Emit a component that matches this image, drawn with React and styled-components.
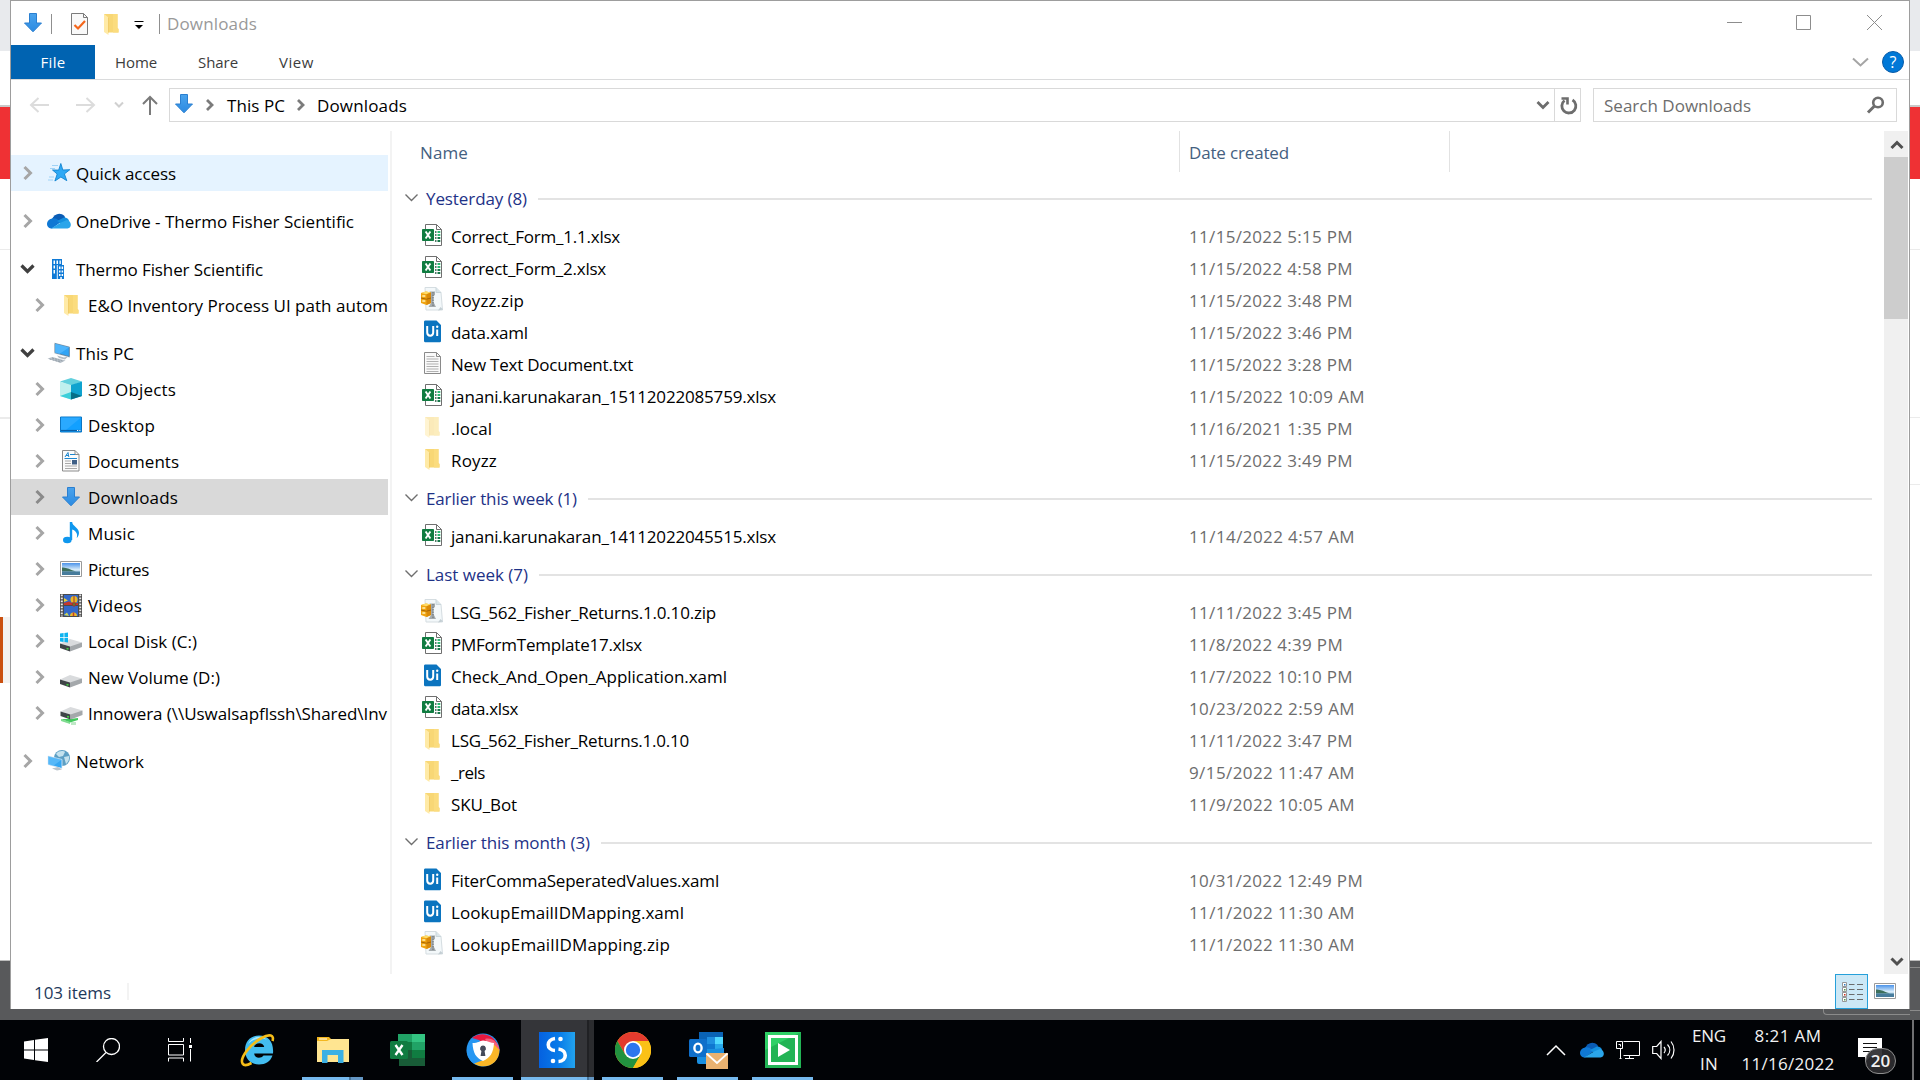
import React, { useLayoutEffect, useRef, useState } from "react";
import styled, { createGlobalStyle } from "styled-components";

const GlobalStyle = createGlobalStyle`
  * { box-sizing: border-box; }
  body { margin: 0; background: #fff; overflow: hidden; }
  svg { display: block; flex: none; }
`;

/* ---------- text ---------- */

const TextSpan = styled.span`
  display: inline-block;
  flex: none;
  white-space: pre;
  font-size: ${(p) => p.$size || 17}px;
  line-height: 24px;
  margin-top: ${(p) => p.$drop || 0}px;
`;

/* Text tracked so that its run is exactly `w` pixels wide. */
function Text({ w, size, drop, children }) {
  const ref = useRef(null);
  const [spacing, setSpacing] = useState(0);
  useLayoutEffect(() => {
    const natural = ref.current.getBoundingClientRect().width;
    setSpacing((w - natural) / children.length);
  }, [w, children]);
  return (
    <TextSpan ref={ref} $size={size} $drop={drop} style={{ letterSpacing: spacing }}>
      {children}
    </TextSpan>
  );
}

/* ---------- small icons ---------- */

const Svg = ({ w = 24, h = 24, box, children }) => (
  <svg width={w} height={h} viewBox={box || `0 0 ${w} ${h}`} fill="none">
    {children}
  </svg>
);

const Stroke = ({ w, h, d, c, sw = 2 }) => (
  <Svg w={w} h={h}>
    <path d={d} stroke={c} strokeWidth={sw} />
  </Svg>
);

const DownArrow = () => (
  <Svg>
    <defs>
      <linearGradient id="dl" x1="0" y1="0" x2="0" y2="1">
        <stop offset="0" stopColor="#4aa3ec" />
        <stop offset="1" stopColor="#2b8ae2" />
      </linearGradient>
    </defs>
    <path d="M8.5 2.5h7v9.5h5L12 20.8 3.5 12h5z" fill="url(#dl)" stroke="#2a7fd0" strokeWidth="1" />
  </Svg>
);

const Folder = ({ faded }) => (
  <Svg>
    <g opacity={faded ? 0.5 : 1} transform="translate(0 1)">
      <path d="M5 1h13.500v14l1 1v3.500H8z" fill="#f8d775" />
      <path d="M14 1h4.500v14l1 1v3.500H14z" fill="#fbdc7e" />
      <path d="M5 1l4.500 3.500V22L5 19z" fill="#ffeaa6" />
      <path d="M9.500 4.500v15" stroke="#edc862" strokeWidth=".8" />
    </g>
  </Svg>
);

const CheckDoc = () => (
  <Svg>
    <path d="M4.500 1.500h12l4 4v17h-16z" fill="#f9f9f9" stroke="#7b7b7b" />
    <path d="M16.500 1.500v4h4" stroke="#7b7b7b" />
    <path d="M7.500 13l3.500 3.500 7-7.500" stroke="#f4661b" strokeWidth="2.200" />
  </Svg>
);

const StarIcon = () => (
  <Svg>
    <path d="M13.800 2.500l2 6.500 7-.300-5.400 4.200 2.400 6.800-5.900-3.700-6 4 2.300-7-4.700-4 6.200.1z" fill="#2ea9f5" stroke="#1283d0" strokeWidth=".9" />
    <path d="M5 4.500h6M3 7.500h5M2 16h5M1 19h5" stroke="#9fd3f7" />
  </Svg>
);

const Cloud = ({ w = 24, h = 16 }) => (
  <Svg w={w} h={h} box="0 0 24 16">
    <path d="M5 6C7 1 13-1.500 17.500 3l1 3-9 4z" fill="#0a5cb5" />
    <path d="M4 15.500C-1.500 15-1.500 6.500 5 5.500c3-.8 5 .5 6.500 1.700L14 9 5 15.500z" fill="#0f78d4" />
    <path d="M10 8l7-3.500c3 0 4.500 1.500 5 3.500l-7 3z" fill="#1490df" />
    <path d="M4 15.500L14 9.500 20 7c4.500.8 5.500 8 .5 8.500z" fill="#2aa5ea" />
  </Svg>
);

const Building = () => (
  <Svg>
    <path d="M5 2h10v20H5z" fill="#0f7ad6" />
    <path d="M11 8h6v14h-6z" fill="#0f7ad6" />
    <path d="M6.500 3.500h1.500v3.500H6.500zM9.500 3.500h1.500v3.500H9.500zM12.500 3.500h1.300v3.500h-1.300zM6.500 8.500h1.500v3H6.500zM6.500 13h1.500v3.500H6.500z" fill="#fff" />
    <path d="M10.300 8v14" stroke="#fff" strokeWidth=".9" />
    <path d="M12 9.500h1.500v2.500H12zM14.600 9.500h1.500v2.500h-1.500zM12 13.500h1.500v2H12zM14.600 13.500h1.500v2h-1.500zM12 17h1.500v2H12zM14.600 17h1.500v2h-1.500zM13.300 20h1.500v2h-1.500z" fill="#fff" />
  </Svg>
);

const Computer = () => (
  <Svg>
    <path d="M7 1.500l16 4v11.500L7 12.500z" fill="#e0e5ea" />
    <path d="M8 2.500l14.300 3.700v9.400L8 11.700z" fill="#31a4f5" stroke="#4f6d85" strokeWidth=".7" />
    <path d="M8 2.500l14.300 3.700-10 6.800L8 11.700z" fill="#5bbcff" opacity=".7" />
    <path d="M10 14.500l7 2 4-1-3 3-6-1.500z" fill="#b4bcc4" />
    <path d="M.5 17.500l5-1.500 13 3.500-5 2.500z" fill="#b9c2ca" />
    <path d="M2.500 18l11 3M5 17l10.500 3" stroke="#8a959f" strokeDasharray="2 1" strokeWidth=".8" />
  </Svg>
);

const Cube = () => (
  <Svg>
    <path d="M12 1l11 3.500L12 9 1 4.500z" fill="#62d0dd" />
    <path d="M1 4.500L12 8v14.500L1 19z" fill="#bff0ee" />
    <path d="M23 4.500L12 8v14.500L23 19z" fill="#0fa3cf" />
    <path d="M12 15l11 4-11 3.500z" fill="#066f86" />
    <path d="M12 15L1 19l11 3.500z" fill="#3ccfd9" />
  </Svg>
);

const DesktopIcon = () => (
  <Svg>
    <path d="M1.500 4h21v15h-21z" fill="#12a0ff" stroke="#0b76c4" />
    <path d="M22 4.500L7 17H2V4.500z" fill="#35adff" opacity=".7" />
    <path d="M2 17.500h20" stroke="#0a5ea6" strokeWidth="1.200" />
    <path d="M18 17.500h1.200M20.300 17.500h1.200" stroke="#fff" strokeWidth="1" />
  </Svg>
);

const DocIcon = () => (
  <Svg>
    <path d="M3.500 1.500h12.500l4 4v16.500H3.500z" fill="#fbfbfb" stroke="#8b8b8b" />
    <path d="M16 1.500v4h4" stroke="#8b8b8b" />
    <path d="M6 8l3-4.500.8 4.500M7 6.500h2.500M11 5.500h5M5.500 9.500h12.500" stroke="#1c86cf" />
    <path d="M6 12h6M6 14.500h6M6 17h12M6 19.500h12" stroke="#a9a9a9" />
    <path d="M13 11h5v4.500h-5z" fill="#3f5f86" />
  </Svg>
);

const Music = () => (
  <Svg>
    <ellipse cx="8.300" cy="19" rx="4.300" ry="3.300" fill="#0f97ee" />
    <path d="M10.800 1h2.400c0 4 6.800 5.500 6.800 11 0 3-2.300 5-2.300 5 1.300-4.500-.7-7-4.500-8.500V19h-2.400z" fill="#0f97ee" />
  </Svg>
);

const Picture = () => (
  <Svg>
    <defs>
      <linearGradient id="sky" x1="0" y1="0" x2="0" y2="1">
        <stop offset="0" stopColor="#4b93ea" />
        <stop offset=".55" stopColor="#d8ecfa" />
        <stop offset="1" stopColor="#6fa5c8" />
      </linearGradient>
    </defs>
    <path d="M1.500 4.500h21v15h-21z" fill="#fff" stroke="#9a9a9a" />
    <path d="M3 6h18v12H3z" fill="url(#sky)" />
    <path d="M3 10.500c4-.5 8 2 14 4H3z" fill="#3d6f5c" />
    <path d="M3 14.500h18V18H3z" fill="#477c9c" />
  </Svg>
);

const Video = () => (
  <Svg>
    <path d="M1 1h22v23H1z" fill="#4a4a4a" />
    <path d="M2.800 1.500v22M21.200 1.500v22" stroke="#e8e8e8" strokeWidth="2" strokeDasharray="1.800 1.200" />
    <path d="M5 2h14v10H5zM5 13h14v10H5z" fill="#3468c8" />
    <path d="M5 10l5-1.500 4 2 5-.5v2H5z" fill="#c6372c" />
    <circle cx="15" cy="6.500" r="3.500" fill="#e9b92a" />
    <path d="M15 3v7M13 10h4l-1 3h-2z" stroke="#a5302a" fill="#4e8b34" />
    <path d="M5 5l4 2.500L5 9z" fill="#e7cf3c" />
    <path d="M11 23a3.500 3.500 0 0 1 7 0z" fill="#e9b92a" />
    <path d="M5 22l3-2.500 2 3.500z" fill="#cdd75a" />
    <path d="M14.500 19.500V23" stroke="#c23a2c" strokeWidth="1.500" />
  </Svg>
);

const driveBody = (
  <>
    <path d="M1 14.500l10-4.500 12 3.500-9 5z" fill="#d9dbdd" />
    <path d="M1 14.500l10 3v5l-10-3.500z" fill="#3f4447" />
    <path d="M11 17.500l12-4v4.500l-12 4.500z" fill="#a4a8ab" />
    <path d="M7.500 19.500l2 .5" stroke="#42d43f" strokeWidth="1.500" />
  </>
);

const Drive = ({ kind }) => (
  <Svg>
    {kind === "net" ? (
      <>
        <path d="M2 18l9 3.500 8-2.500v-2l-8 1z" fill="#42c95c" />
        <path d="M2 18v2l9 3v-2z" fill="#7fdc90" />
        <path d="M12 21h5v3h-5z" fill="#bfe8c6" />
        <g transform="translate(.5 -4)">{driveBody}</g>
      </>
    ) : (
      driveBody
    )}
    {kind === "win" && (
      <path d="M1 4.500l3.600-.5v4H1zM5.400 3.900L9 3.400V8H5.400zM1 8.800h3.600V13L1 12.500zM5.400 8.800H9v4.700l-3.600-.4z" fill="#0fb4f0" />
    )}
  </Svg>
);

const NetworkIcon = () => (
  <Svg>
    <circle cx="15" cy="9" r="8" fill="#5d9fc4" />
    <path d="M9 5c3-4 8-3 9-2l-2 4-4 1zM17 8l5-1c.5 3-.5 6-3 8z" fill="#c4e2ee" />
    <path d="M1 7l14 3.500v9L1 15.500z" fill="#35a7f3" stroke="#e4eef5" strokeWidth=".8" />
    <path d="M1 7l14 3.500-9 6.500-5-1.500z" fill="#6cc3fb" opacity=".6" />
    <path d="M5 19.500l5 2 5-1-4-2.500z" fill="#b9c3cb" />
  </Svg>
);

const ExcelFile = () => (
  <Svg>
    <path d="M5.500 1.500h11l5 5v16h-16z" fill="#fff" stroke="#6f6f6f" />
    <path d="M16.500 1.500v5h5" stroke="#6f6f6f" />
    <path d="M15 9h1.500M15 12h1.500M15 15h1.500M15 18h1.500" stroke="#1d4f38" strokeWidth="1.300" />
    <path d="M17.500 9h2.800M17.500 12h2.800" stroke="#2cba75" strokeWidth="1.800" />
    <path d="M17.500 15h2.800M17.500 18h2.800" stroke="#17784a" strokeWidth="1.800" />
    <rect x="2" y="6" width="12" height="12" rx=".8" fill="#107c41" />
    <path d="M5.600 8.500l4.800 7M10.400 8.500l-4.800 7" stroke="#fff" strokeWidth="1.900" />
  </Svg>
);

const ZipFile = () => (
  <Svg>
    <path d="M5 .500h11l5 5 1.500 17.500L6 23z" fill="#f3f8fa" stroke="#d5dde1" />
    <path d="M16 .500v5h5" fill="#dbe6ea" stroke="#cad6db" />
    <path d="M20.500 20l2.500 2.500-5 1z" fill="#c3ced3" />
    <path d="M9.500 4.500h5.500v3.500l-1.500 1v6l2.500 5H8.500l2.500-4V9z" fill="#a4abae" />
    <path d="M13 5v15" stroke="#757b7e" strokeWidth="1.300" strokeDasharray="1.500 1" />
    <path d="M1 6l5-1.500 5 1v10.500l-4.500 2L1 16z" fill="#f0a411" />
    <path d="M1 6l5-1.500 5 1-4.500 1.700z" fill="#ffdc68" />
    <path d="M6.500 7.200L11 5.500v10.500l-4.500 2z" fill="#d98a0a" />
    <path d="M1 11l5.500 1.200L11 11" stroke="#a86604" />
    <path d="M2.300 9h3M2.300 14h3" stroke="#fff1b5" strokeWidth="1.300" />
  </Svg>
);

const UiFile = () => (
  <Svg>
    <g transform="translate(0 1)">
      <path d="M5 .500h11.500L21 5v16a1.200 1.200 0 0 1-1.200 1.200H5A1.200 1.200 0 0 1 4 21V1.700A1.200 1.200 0 0 1 5 .5z" fill="#0b74bf" />
      <path d="M7.200 6v6.500c0 4.200 6 4.200 6 0V6M17.200 9.500V16" stroke="#fff" strokeWidth="2" />
      <circle cx="17.200" cy="6.800" r="1.200" fill="#fff" />
    </g>
  </Svg>
);

const TxtFile = () => (
  <Svg>
    <path d="M4.500 1.500h12l4 4v17h-16z" fill="#fafafa" stroke="#8a8a8a" />
    <path d="M16.500 1.500v4h4" stroke="#8a8a8a" />
    <path d="M6.500 5.500h8M6.500 8h12M6.500 10.500h12M6.500 13h12M6.500 15.500h12M6.500 18h12M6.500 20.500h12" stroke="#a8a8a8" strokeWidth=".9" />
  </Svg>
);

const fileIcons = { xlsx: ExcelFile, zip: ZipFile, xaml: UiFile, txt: TxtFile, dir: Folder };

/* ---------- desktop and the page behind the window ---------- */

const Desktop = styled.div`
  width: 1920px;
  height: 1080px;
  display: flex;
  flex-direction: column;
  background: #58595b;
  font-family: "Open Sans", "Noto Sans", sans-serif;
  color: #000;
  overflow: hidden;
`;
const Stage = styled.div`
  display: flex;
  height: 1020px;
`;
const Edge = styled.div`
  width: 10px;
  display: flex;
  flex-direction: column;
`;
const Band = styled.div`
  height: ${(p) => p.$h}px;
  background: ${(p) => p.$c};
  border-left: ${(p) => (p.$mark ? "3px solid #ca5010" : "none")};
`;
const EdgeCorner = styled.div`
  width: 87px;
  height: 6px;
  margin-left: auto;
  border: solid #8b8b8b;
  border-width: 0 0 1px 1px;
  border-bottom-left-radius: 4px;
`;
const Center = styled.div`
  width: 1900px;
  display: flex;
  flex-direction: column;
`;
const Window = styled.div`
  height: 1009px;
  background: #fff;
  border: 1px solid #9d9d9d;
  border-bottom: none;
  display: flex;
  flex-direction: column;
`;

/* ---------- title bar and ribbon ---------- */

const TitleBar = styled.div`
  height: 44px;
  display: flex;
  align-items: center;
  padding: 2px 26px 0 10px;
  color: #999;
`;
const Slot = styled.div`
  width: ${(p) => p.$w}px;
  display: flex;
  align-items: center;
  justify-content: ${(p) => p.$j || "flex-start"};
  margin-bottom: ${(p) => p.$lift || 0}px;
  flex: none;
`;
const Tick = styled.div`
  width: 1px;
  height: 20px;
  background: #8f8f8f;
  margin-right: ${(p) => p.$mr}px;
`;
const Spacer = styled.div`
  flex: 1;
`;
const Caption = styled.div`
  display: flex;
  margin-bottom: 3px;
`;
const Ribbon = styled.div`
  height: 35px;
  display: flex;
  align-items: center;
  border-bottom: 1px solid #dadbdc;
  color: #3c3c3c;
  padding-right: 5px;
`;
const FileTab = styled.div`
  align-self: stretch;
  width: 84px;
  background: #0063b1;
  color: #fff;
  display: flex;
  align-items: center;
  justify-content: center;
`;
const Tab = styled.div`
  margin-left: ${(p) => p.$ml}px;
`;
const Help = styled.div`
  width: 22px;
  height: 22px;
  margin-left: 13px;
  border-radius: 50%;
  border: 1px solid #0a5ca8;
  background: #0078d7;
  color: #fff;
  font-size: 16px;
  line-height: 20px;
  text-align: center;
`;

/* ---------- navigation ---------- */

const NavBar = styled.div`
  height: 51px;
  display: flex;
  align-items: flex-start;
  padding: 8px 12px 0 18px;
`;
const NavButtons = styled.div`
  width: 140px;
  height: 34px;
  display: flex;
  align-items: center;
`;
const AddressBox = styled.div`
  width: 1412px;
  height: 34px;
  border: 1px solid #d9d9d9;
  display: flex;
  align-items: center;
`;
const Refresh = styled.div`
  width: 26px;
  height: 32px;
  border-left: 1px solid #d9d9d9;
  margin-left: 3px;
  padding: 2px 0 0 3px;
  display: flex;
  align-items: center;
  justify-content: center;
`;
const SearchBox = styled.div`
  width: 304px;
  height: 34px;
  margin-left: 12px;
  border: 1px solid #d9d9d9;
  display: flex;
  align-items: center;
  justify-content: space-between;
  padding: 0 11px 0 10px;
  color: #6d6d6d;
`;

/* ---------- body ---------- */

const Body = styled.div`
  height: 843px;
  display: flex;
`;
const Tree = styled.div`
  width: 379px;
  padding-top: 24px;
  flex: none;
`;
const TreeRow = styled.div`
  width: 377px;
  height: 36px;
  display: flex;
  align-items: center;
  overflow: hidden;
  padding-left: ${(p) => (p.$child ? 18 : 6)}px;
  margin-top: ${(p) => (p.$gap ? 12 : 0)}px;
  background: ${(p) => (p.$tone === "hover" ? "#e5f3ff" : p.$tone === "selected" ? "#d9d9d9" : "transparent")};
`;
const TreeIcon = styled.div`
  width: 24px;
  height: 24px;
  display: flex;
  align-items: center;
  justify-content: center;
  margin: 0 5px 0 10px;
  flex: none;
`;
const Divider = styled.div`
  width: 2px;
  background: #f3f3f3;
`;
const List = styled.div`
  flex: 1;
  display: flex;
  flex-direction: column;
`;
const Columns = styled.div`
  display: flex;
  height: 46px;
  color: #44607f;
`;
const Column = styled.div`
  width: ${(p) => p.$w}px;
  height: 41px;
  padding: 10px 0 0 ${(p) => p.$pl}px;
  border-right: 1px solid #e2e2e2;
`;
const GroupHead = styled.div`
  height: 44px;
  display: flex;
  align-items: center;
  padding: 0 12px 0 12px;
  color: #1e3287;
`;
const Rule = styled.div`
  flex: 1;
  height: 2px;
  margin-left: 11px;
  background: #e3e3e3;
`;
const FileRow = styled.div`
  height: 32px;
  display: flex;
  align-items: center;
  padding-left: 28px;
`;
const FileIcon = styled.div`
  margin-top: -4px;
`;
const FileName = styled.div`
  width: 745px;
  padding-left: 7px;
`;
const FileDate = styled.div`
  color: #6d6d6d;
`;
const ScrollBar = styled.div`
  width: 25px;
  background: #f0f0f0;
  border-right: 1px solid #fff;
  display: flex;
  flex-direction: column;
  align-items: center;
`;
const ScrollBtn = styled.div`
  height: 26px;
  padding: 2px 0 0 1px;
  display: flex;
  align-items: center;
`;
const Thumb = styled.div`
  width: 24px;
  height: 162px;
  background: #cdcdcd;
  margin-bottom: auto;
`;

/* ---------- status bar ---------- */

const StatusBar = styled.div`
  height: 35px;
  display: flex;
  align-items: flex-start;
  padding-left: 23px;
  color: #1e395b;
`;
const StatusText = styled.div`
  width: 93px;
  padding-top: 7px;
`;
const StatusTick = styled.div`
  width: 2px;
  height: 17px;
  margin-top: 9px;
  background: #f3f3f3;
`;
const ViewButton = styled.div`
  width: 33px;
  height: 35px;
  display: flex;
  align-items: center;
  justify-content: center;
  background: ${(p) => (p.$active ? "#cce8f6" : "transparent")};
  border: 1px solid ${(p) => (p.$active ? "#26a0da" : "transparent")};
  padding-bottom: ${(p) => (p.$active ? 0 : 2)}px;
  margin-right: ${(p) => (p.$active ? 0 : 8)}px;
`;

/* ---------- taskbar ---------- */

const TaskBar = styled.div`
  height: 60px;
  background: #010306;
  display: flex;
  color: #f2f2f2;
`;
const SystemButton = styled.div`
  width: 72px;
  display: flex;
  align-items: center;
  justify-content: center;
`;
const AppButton = styled.div`
  width: ${(p) => (p.$active ? 81 : 75)}px;
  height: 60px;
  margin-left: ${(p) => (p.$active ? -6 : 0)}px;
  display: grid;
  grid-template-rows: 57px 3px;
`;
const AppFace = styled.div`
  width: ${(p) => (p.$active ? 73 : 61)}px;
  padding: 3px ${(p) => (p.$active ? 1 : 0)}px 0 0;
  background: ${(p) => (p.$active ? "linear-gradient(90deg,#343539 66px,#202124 66px,#202124 68px,#2b2c2f 68px)" : "transparent")};
  display: flex;
  align-items: center;
  justify-content: center;
`;
const Underline = styled.div`
  width: ${(p) => p.$w}px;
  background: ${(p) =>
    p.$split
      ? `linear-gradient(90deg,#76b9ed ${p.$split}px,#47759a ${p.$split}px,#47759a ${p.$split + 2}px,#6497c4 ${p.$split + 2}px)`
      : p.$w
      ? "#76b9ed"
      : "transparent"};
`;
const Tray = styled.div`
  display: flex;
  align-items: center;
  margin-left: auto;
`;
const TrayStack = styled.div`
  width: ${(p) => p.$w}px;
  display: flex;
  flex-direction: column;
  align-items: center;
  gap: 4px;
`;
const Notice = styled.div`
  position: relative;
  width: 30px;
  height: 24px;
  margin: 0 0 0 14px;
`;
const NoticeBadge = styled.div`
  position: absolute;
  left: 7px;
  top: 10px;
  width: 31px;
  height: 26px;
  border: 1px solid #8f8f8f;
  border-radius: 13px;
  background: rgba(45, 45, 48, 0.93);
  font-size: 17px;
  font-weight: 600;
  line-height: 24px;
  text-align: center;
`;
const ShowDesktop = styled.div`
  width: 8px;
  height: 60px;
  margin-left: 24px;
  border-left: 2px solid #6f7072;
`;

const WindowsLogo = () => (
  <Svg>
    <path d="M0 3.500L10 2v9.500H0zM11 1.800L24 0v11.500H11zM0 12.500h10V22L0 20.500zM11 12.500h13V24l-13-1.800z" fill="#fff" />
  </Svg>
);
const SearchGlyph = () => (
  <Svg>
    <circle cx="15.500" cy="8.500" r="8" stroke="#fff" strokeWidth="1.300" />
    <path d="M10 14.500L.5 24" stroke="#fff" strokeWidth="1.300" />
  </Svg>
);
const TaskView = () => (
  <Svg>
    <path d="M.5 0v3.500h15V0M.5 6.500h15v10.500H.5zM.5 23.500V20h15v3.500M22.500 0v5M22.500 11v12.500" stroke="#fff" />
    <path d="M21 7h3v3h-3z" fill="#fff" />
  </Svg>
);
const IE = () => (
  <Svg w={36} h={36}>
    <path d="M19 3.500c-8.500 0-14 6-14 14.500s5.500 14.500 14 14.500c6.500 0 11.500-3 13.500-9h-9c-2.500 3.500-9 3-9.300-2H33C34 10 28.500 3.500 19 3.500zm-4.800 11.500c.6-5 9.500-5.300 10 0z" fill="#43bdf0" />
    <path d="M8 12c3-7 13-10 19-4-6-3-14-1-19 4z" fill="#a7e8ff" />
    <path d="M32.500 9c2-6-3-7.500-11-3C10 12.500-.5 26 2.500 31.500c1.500 2.500 5.500 1.500 9-.5" stroke="#f5bd18" strokeWidth="2.600" />
  </Svg>
);
const Explorer = () => (
  <Svg w={36} h={36}>
    <path d="M2 5h12l2 2v5H2z" fill="#f3b71e" />
    <path d="M4 7h8" stroke="#fff" />
    <path d="M2 9h10l4-2h18v23H2z" fill="#ffe591" />
    <path d="M7 31V18h21.500v13H23v-8H12.500v8z" fill="#3cb0e3" />
  </Svg>
);
const Excel = () => (
  <Svg w={36} h={36}>
    <path d="M9 2h26v32H9z" fill="#185c37" />
    <path d="M8 2h14v8H8z" fill="#21a366" />
    <path d="M22 2h13v8H22z" fill="#33c481" />
    <path d="M8 10h14v8H8z" fill="#107c41" />
    <path d="M22 10h13v8H22z" fill="#21a366" />
    <path d="M22 18h13v8H22z" fill="#107c41" />
    <rect x="0" y="9" width="18" height="18" rx="1.500" fill="#107c41" />
    <path d="M5.500 13l7 10M12.500 13l-7 10" stroke="#fff" strokeWidth="2.400" />
  </Svg>
);
const LockApp = () => (
  <Svg w={36} h={36}>
    <circle cx="18" cy="18" r="16.500" fill="#2697f2" />
    <path d="M7 6C15-1 31 1 34.500 18l-6 2L14 8z" fill="#e9193f" />
    <path d="M20 7c6-2 13.500 3 14.500 11l-6 3z" fill="#f5607b" />
    <path d="M34.500 18c0 14-14 20.500-25.500 13.500l9-5 11-14z" fill="#fab627" />
    <path d="M9 31.500c-8.500-5-9.500-16.500-2.500-24.500l2 12 10 9z" fill="#2697f2" />
    <path d="M7.500 11c6 0 7-2 10.500-2.500 5 .5 8 2.500 11 2.500-.5 10-4 15-11 18-7-3-10-8-10.500-18z" fill="#fff" />
    <path d="M18 13.500a3 3 0 0 1 1.600 5.500l.8 5h-4.800l.8-5A3 3 0 0 1 18 13.500z" fill="#454b5a" />
  </Svg>
);
const SApp = () => (
  <Svg w={36} h={36}>
    <defs>
      <linearGradient id="sblue">
        <stop offset="0" stopColor="#0561e0" />
        <stop offset=".55" stopColor="#087be9" />
        <stop offset="1" stopColor="#22a3ee" />
      </linearGradient>
    </defs>
    <path d="M0 0h36v36H0z" fill="url(#sblue)" />
    <path d="M16 6.500c-9 1-9 11.500 0 12" stroke="#fff" strokeWidth="3.600" />
    <path d="M19.500 17c9 1 9 12 0 12.500" stroke="#fff" strokeWidth="3.600" />
    <path d="M18.800 8v9" stroke="#fff" strokeWidth="1.800" opacity=".0" />
    <circle cx="21.500" cy="7" r="2.300" fill="#fff" />
    <circle cx="14" cy="29" r="2.300" fill="#fff" />
  </Svg>
);
const Chrome = () => (
  <Svg w={36} h={36}>
    <circle cx="18" cy="18" r="18" fill="#fbc116" />
    <path d="M2.400 9A18 18 0 0 1 33.600 9H18l-7.800 13.500z" fill="#e33b2e" />
    <path d="M2.400 9A18 18 0 0 0 18 36l7.800-13.500L10.200 22.500z" fill="#22923f" />
    <path d="M18 9h15.600A18 18 0 0 1 18 36l7.800-13.500z" fill="#fbc116" />
    <circle cx="18" cy="18" r="9" fill="#fff" />
    <circle cx="18" cy="18" r="7.200" fill="#2d76ee" />
  </Svg>
);
const Outlook = () => (
  <Svg w={40} h={38}>
    <path d="M11 1h24v20H11z" fill="#0a63b5" />
    <path d="M19 6h8v7h-8z" fill="#1f8fe0" />
    <path d="M27 6h8v7h-8z" fill="#50d9ff" />
    <path d="M19 13h8v7h-8z" fill="#0f77d0" />
    <path d="M27 13h8v7h-8z" fill="#28a8ea" />
    <path d="M9 18h17l10-1v16H11a2 2 0 0 1-2-2z" fill="#1a8fe0" />
    <rect x="1" y="8" width="18" height="18" rx="1.500" fill="#0f6fca" />
    <ellipse cx="10" cy="17" rx="3.600" ry="4.400" stroke="#fff" strokeWidth="2.400" />
    <path d="M18 22h22v16H18z" fill="#eab270" />
    <path d="M18.500 22.500L29 32l10.500-9.500" stroke="#fff" strokeWidth="1.800" />
  </Svg>
);
const PlayApp = () => (
  <Svg w={36} h={36}>
    <path d="M0 0h36v36H0z" fill="#22b455" />
    <path d="M0 0h36L0 18z" fill="#2fd066" />
    <path d="M4.500 4.500h27v27h-27z" stroke="#fff" strokeWidth="3" />
    <path d="M13 11l12 7-12 7z" fill="#fff" />
  </Svg>
);

/* ---------- data ---------- */

const tree = [
  { label: "Quick access", w: 100, icon: <StarIcon />, tone: "hover", state: "closed" },
  { label: "OneDrive - Thermo Fisher Scientific", w: 278, icon: <Cloud />, gap: true, state: "closed" },
  { label: "Thermo Fisher Scientific", w: 187, icon: <Building />, gap: true, state: "open" },
  { label: "E&O Inventory Process UI path autom", w: 300, icon: <Folder />, child: true },
  { label: "This PC", w: 58, icon: <Computer />, gap: true, state: "open" },
  { label: "3D Objects", w: 88, icon: <Cube />, child: true },
  { label: "Desktop", w: 67, icon: <DesktopIcon />, child: true },
  { label: "Documents", w: 91, icon: <DocIcon />, child: true },
  { label: "Downloads", w: 90, icon: <DownArrow />, child: true, tone: "selected" },
  { label: "Music", w: 47, icon: <Music />, child: true },
  { label: "Pictures", w: 61, icon: <Picture />, child: true },
  { label: "Videos", w: 54, icon: <Video />, child: true },
  { label: "Local Disk (C:)", w: 109, icon: <Drive kind="win" />, child: true },
  { label: "New Volume (D:)", w: 132, icon: <Drive />, child: true },
  { label: "Innowera (\\\\Uswalsapflssh\\Shared\\Inv", w: 299, icon: <Drive kind="net" />, child: true },
  { label: "Network", w: 68, icon: <NetworkIcon />, gap: true, state: "closed" },
];

const groups = [
  {
    title: "Yesterday (8)", w: 101,
    files: [
      ["xlsx", "Correct_Form_1.1.xlsx", 169, "11/15/2022 5:15 PM", 164],
      ["xlsx", "Correct_Form_2.xlsx", 155, "11/15/2022 4:58 PM", 164],
      ["zip", "Royzz.zip", 73, "11/15/2022 3:48 PM", 164],
      ["xaml", "data.xaml", 77, "11/15/2022 3:46 PM", 164],
      ["txt", "New Text Document.txt", 182, "11/15/2022 3:28 PM", 164],
      ["xlsx", "janani.karunakaran_15112022085759.xlsx", 325, "11/15/2022 10:09 AM", 176],
      ["faded", ".local", 41, "11/16/2021 1:35 PM", 164],
      ["dir", "Royzz", 46, "11/15/2022 3:49 PM", 164],
    ],
  },
  {
    title: "Earlier this week (1)", w: 151,
    files: [["xlsx", "janani.karunakaran_14112022045515.xlsx", 325, "11/14/2022 4:57 AM", 166]],
  },
  {
    title: "Last week (7)", w: 102,
    files: [
      ["zip", "LSG_562_Fisher_Returns.1.0.10.zip", 265, "11/11/2022 3:45 PM", 164],
      ["xlsx", "PMFormTemplate17.xlsx", 191, "11/8/2022 4:39 PM", 154],
      ["xaml", "Check_And_Open_Application.xaml", 276, "11/7/2022 10:10 PM", 164],
      ["xlsx", "data.xlsx", 67, "10/23/2022 2:59 AM", 166],
      ["dir", "LSG_562_Fisher_Returns.1.0.10", 238, "11/11/2022 3:47 PM", 164],
      ["dir", "_rels", 34, "9/15/2022 11:47 AM", 166],
      ["dir", "SKU_Bot", 66, "11/9/2022 10:05 AM", 166],
    ],
  },
  {
    title: "Earlier this month (3)", w: 164,
    files: [
      ["xaml", "FiterCommaSeperatedValues.xaml", 268, "10/31/2022 12:49 PM", 174],
      ["xaml", "LookupEmailIDMapping.xaml", 233, "11/1/2022 11:30 AM", 166],
      ["zip", "LookupEmailIDMapping.zip", 219, "11/1/2022 11:30 AM", 166],
    ],
  },
];

const apps = [
  { icon: <IE /> },
  { icon: <Explorer />, line: 61, split: 47 },
  { icon: <Excel /> },
  { icon: <LockApp />, line: 61 },
  { icon: <SApp />, line: 73, split: 66, active: true },
  { icon: <Chrome />, line: 61 },
  { icon: <Outlook />, line: 61 },
  { icon: <PlayApp />, line: 61 },
];

/* ---------- composition ---------- */

const FileItem = ({ file: [kind, name, w, date, dw] }) => {
  const Icon = fileIcons[kind] || Folder;
  return (
    <FileRow>
      <FileIcon><Icon faded={kind === "faded"} /></FileIcon>
      <FileName><Text w={w}>{name}</Text></FileName>
      <FileDate><Text w={dw}>{date}</Text></FileDate>
    </FileRow>
  );
};

const TreeItem = ({ item }) => (
  <TreeRow $child={item.child} $gap={item.gap} $tone={item.tone}>
    {item.state === "open" ? (
      <Stroke w={20} h={20} d="M4.500 6.500l6 6 6-6" c="#404040" sw={3.2} />
    ) : (
      <Stroke w={20} h={20} d="M7.500 4l6 6-6 6" c={item.tone === "selected" ? "#8a8a8a" : "#a6a6a6"} sw={3} />
    )}
    <TreeIcon>{item.icon}</TreeIcon>
    <Text w={item.w} drop={2}>{item.label}</Text>
  </TreeRow>
);

export default function App() {
  return (
    <Desktop>
      <GlobalStyle />
      <Stage>
        <Edge>
          <Band $h={51} $c="#e8eaed" />
          <Band $h={54} $c="#fff" />
          <Band $h={2} $c="#c9c9c9" />
          <Band $h={72} $c="#ef3134" />
          <Band $h={70} $c="#fff" />
          <Band $h={1} $c="#ebebeb" />
          <Band $h={167} $c="#fff" />
          <Band $h={2} $c="#ebebeb" />
          <Band $h={198} $c="#fff" />
          <Band $h={66} $c="#f3f2f1" $mark />
          <Band $h={277} $c="#fff" />
          <Band $h={1} $c="#bdbdbd" />
        </Edge>
        <Center>
          <Window>
            <TitleBar>
              <Slot $w={30} $lift={3}><DownArrow /></Slot>
              <Tick $mr={15} />
              <Slot $w={32} $lift={1}><CheckDoc /></Slot>
              <Slot $w={34}><Folder /></Slot>
              <Slot $w={26}>
                <Svg w={12} h={14}><path d="M1.500 4.500h9" stroke="#000" /><path d="M2 8h8l-4 4z" fill="#000" /></Svg>
              </Slot>
              <Tick $mr={7} />
              <Text w={90}>Downloads</Text>
              <Spacer />
              <Caption>
                <Slot $w={69}><Stroke w={17} h={17} d="M1 8.500h15" c="#8d8d8d" sw={1} /></Slot>
                <Slot $w={71}><Stroke w={17} h={17} d="M1.500 1.500h14v14h-14z" c="#8d8d8d" sw={1} /></Slot>
                <Stroke w={17} h={17} d="M1 1l15 15M16 1L1 16" c="#8d8d8d" sw={1} />
              </Caption>
            </TitleBar>
            <Ribbon>
              <FileTab><Text w={25} size={15}>File</Text></FileTab>
              <Tab $ml={20}><Text w={42} size={15}>Home</Text></Tab>
              <Tab $ml={41}><Text w={40} size={15}>Share</Text></Tab>
              <Tab $ml={41}><Text w={35} size={15}>View</Text></Tab>
              <Spacer />
              <Stroke w={17} h={12} d="M1 2.500l7.500 7 7.500-7" c="#a5a5a5" sw={2} />
              <Help>?</Help>
            </Ribbon>
            <NavBar>
              <NavButtons>
                <Slot $w={46}><Stroke w={22} h={18} d="M20 9H2M9.500 2L2 9l7.500 7" c="#dcdcdc" /></Slot>
                <Slot $w={38}><Stroke w={22} h={18} d="M1 9h18M11.500 2L19 9l-7.500 7" c="#dcdcdc" /></Slot>
                <Slot $w={28}><Stroke w={12} h={10} d="M2 2.500l4 4 4-4" c="#d0d0d0" /></Slot>
                <Stroke w={18} h={20} d="M9 20V2M2 9l7-7 7 7" c="#7a7a7a" />
              </NavButtons>
              <AddressBox>
                <Slot $w={34} $lift={2}><Slot $w={2} /><DownArrow /></Slot>
                <Slot $w={23}><Stroke w={12} h={14} d="M3 2l5 5-5 5" c="#7b7b7b" sw={2.8} /></Slot>
                <Text w={58} drop={2}>This PC</Text>
                <Slot $w={32} $j="center"><Stroke w={12} h={14} d="M3 2l5 5-5 5" c="#7b7b7b" sw={2.8} /></Slot>
                <Text w={90} drop={2}>Downloads</Text>
                <Spacer />
                <Stroke w={16} h={12} d="M2.500 3l5.500 5.500L13.500 3" c="#6d6d6d" sw={2.8} />
                <Refresh>
                  <Svg w={18} h={18}>
                    <path d="M12.500 3a7 7 0 1 1-8 .5" stroke="#6d6d6d" strokeWidth="2.800" />
                    <path d="M1.500 1.500h6V7.500" stroke="#6d6d6d" strokeWidth="2.600" />
                  </Svg>
                </Refresh>
              </AddressBox>
              <SearchBox>
                <Text w={147} drop={2}>Search Downloads</Text>
                <Svg w={19} h={18}>
                  <circle cx="12" cy="6.500" r="4.800" stroke="#6d6d6d" strokeWidth="2.600" />
                  <path d="M8.500 10L2 16.500" stroke="#6d6d6d" strokeWidth="3" />
                </Svg>
              </SearchBox>
            </NavBar>
            <Body>
              <Tree>
                {tree.map((item) => <TreeItem key={item.label} item={item} />)}
              </Tree>
              <Divider />
              <List>
                <Columns>
                  <Column $w={788} $pl={28}><Text w={48}>Name</Text></Column>
                  <Column $w={270} $pl={9}><Text w={100}>Date created</Text></Column>
                </Columns>
                {groups.map((g) => (
                  <React.Fragment key={g.title}>
                    <GroupHead>
                      <Slot $w={22}><Stroke w={15} h={12} d="M1.500 1.500l6 6 6-6" c="#6f6f6f" sw={1.4} /></Slot>
                      <Text w={g.w}>{g.title}</Text>
                      <Rule />
                    </GroupHead>
                    {g.files.map((f) => <FileItem key={f[1]} file={f} />)}
                  </React.Fragment>
                ))}
              </List>
              <ScrollBar>
                <ScrollBtn><Stroke w={14} h={10} d="M1.500 8l5.500-5.500L12.500 8" c="#505050" sw={3} /></ScrollBtn>
                <Thumb />
                <ScrollBtn><Stroke w={14} h={10} d="M1.500 1.500l5.500 5.500L12.500 1.500" c="#505050" sw={3} /></ScrollBtn>
              </ScrollBar>
            </Body>
            <StatusBar>
              <StatusText><Text w={77}>103 items</Text></StatusText>
              <StatusTick />
              <Spacer />
              <ViewButton $active>
                <Svg w={22} h={22}>
                  <path d="M1.500 1.500h4v4h-4zM1.500 6.500h4v4h-4zM1.500 11.500h4v4h-4zM1.500 16.500h4v4h-4z" fill="#fff" stroke="#969696" />
                  <path d="M3 3h1.500v1.500H3z" fill="#2f7fc0" />
                  <path d="M3 8h1.500v1.500H3zM3 18h1.500v1.500H3z" fill="#4f9a4a" />
                  <path d="M3 13h1.500v1.500H3z" fill="#d0301f" />
                  <path d="M8 3.500h5.500M16 3.500h6M8 8.500h5.500M16 8.500h6M8 13.500h5.500M16 13.500h6M8 18.500h5.500M16 18.500h6" stroke="#6b6b6b" />
                </Svg>
              </ViewButton>
              <ViewButton><Picture /></ViewButton>
            </StatusBar>
          </Window>
          <EdgeCorner />
        </Center>
        <Edge>
          <Band $h={51} $c="#e8eaed" />
          <Band $h={54} $c="#fff" />
          <Band $h={2} $c="#c9c9c9" />
          <Band $h={72} $c="#ef3134" />
          <Band $h={70} $c="#fff" />
          <Band $h={1} $c="#ebebeb" />
          <Band $h={167} $c="#fff" />
          <Band $h={1} $c="#ebebeb" />
          <Band $h={66} $c="#fff" />
          <Band $h={1} $c="#ebebeb" />
          <Band $h={475} $c="#fff" />
          <Band $h={1} $c="#bdbdbd" />
          <Band $h={6} $c="#58595b" />
          <Band $h={1} $c="#8b8b8b" />
          <Band $h={42} $c="#58595b" />
          <Band $h={1} $c="#8b8b8b" />
        </Edge>
      </Stage>
      <TaskBar>
        <SystemButton><WindowsLogo /></SystemButton>
        <SystemButton><SearchGlyph /></SystemButton>
        <SystemButton><TaskView /></SystemButton>
        <Slot $w={11} />
        {apps.map((a, i) => (
          <AppButton key={i} $active={a.active}>
            <AppFace $active={a.active}>{a.icon}</AppFace>
            <Underline $w={a.line || 0} $split={a.split} />
          </AppButton>
        ))}
        <Tray>
          <Slot $w={34}><Stroke w={20} h={12} d="M1 11l9-9 9 9" c="#fff" sw={1.5} /></Slot>
          <Slot $w={36}><Cloud /></Slot>
          <Slot $w={36}>
            <Svg w={25} h={20}>
              <path d="M7.500 1.500h16v14h-16M4.500 9v9.500M.500 1.500h6v7h-6zM3.500 18.500h2M9 18.500h9M13.500 15.500v3M2.500 4.500h2v2" stroke="#fff" />
            </Svg>
          </Slot>
          <Slot $w={34}>
            <Svg w={23} h={20}>
              <path d="M.7 6.500h4L9 1.500v17l-4.300-5h-4z" stroke="#fff" strokeWidth="1.200" />
              <path d="M12 7c1.500 1.800 1.500 4.200 0 6M15.500 4.500c3 3.300 3 7.700 0 11M19 1.500c4 5 4 12 0 17" stroke="#fff" strokeWidth="1.200" />
            </Svg>
          </Slot>
          <TrayStack $w={46}>
            <Text w={34}>ENG</Text>
            <Text w={18}>IN</Text>
          </TrayStack>
          <TrayStack $w={112}>
            <Text w={67}>8:21 AM</Text>
            <Text w={93}>11/16/2022</Text>
          </TrayStack>
          <Notice>
            <Svg>
              <path d="M0 0h24v19H12l-5 5v-5H0z" fill="#fff" />
              <path d="M5 5.500h14M5 9.500h14M5 13.500h9" stroke="#111" />
            </Svg>
            <NoticeBadge>20</NoticeBadge>
          </Notice>
          <ShowDesktop />
        </Tray>
      </TaskBar>
    </Desktop>
  );
}
